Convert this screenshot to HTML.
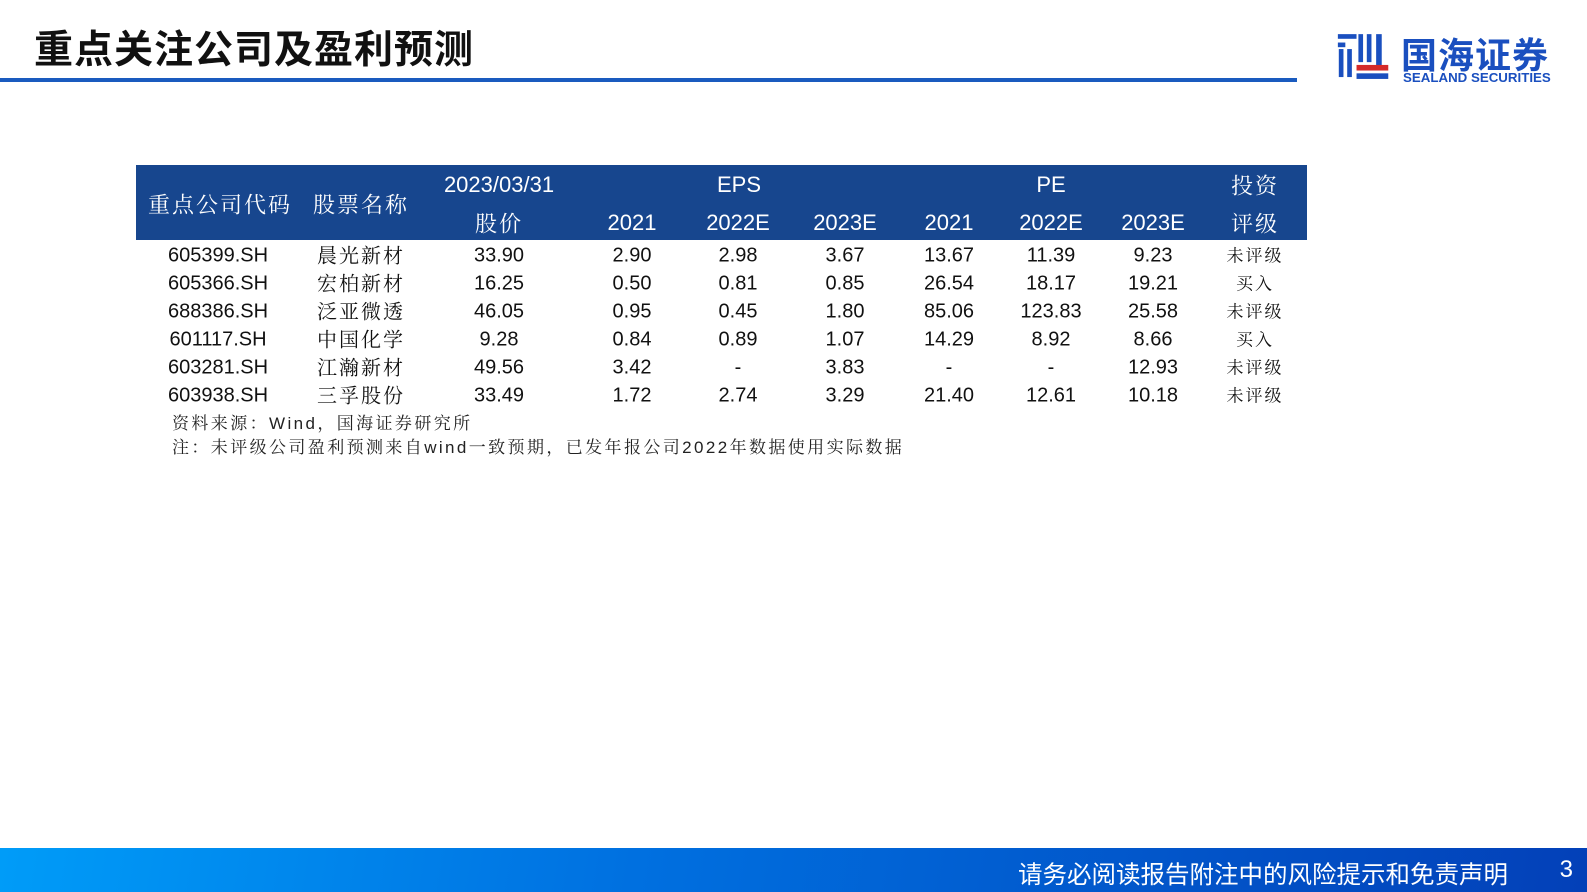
<!DOCTYPE html>
<html><head><meta charset="utf-8"><style>
body{margin:0;width:1587px;height:892px;position:relative;background:#fff;overflow:hidden;font-family:"Liberation Sans","Noto Sans CJK SC",sans-serif}
.title{position:absolute;left:34px;top:19px;font-size:39px;font-weight:bold;color:#111;letter-spacing:1px}
.line{position:absolute;left:0;top:78px;width:1297px;height:4px;background:#1a5bbf}
.hd{position:absolute;left:136px;top:165px;width:1171px;height:75px;background:#17468e}
.t{position:absolute;transform:translate(-50%,-50%);white-space:nowrap;font-size:20px;color:#111}
.w{color:#fff;font-size:22px}
.s{font-family:"Liberation Serif","Noto Serif CJK SC",serif;letter-spacing:2px}
.note{position:absolute;left:172px;font-size:17px;color:#222;letter-spacing:2.4px;font-family:"Liberation Sans","Noto Serif CJK SC",serif}
.foot{position:absolute;left:0;top:848px;width:1587px;height:44px;background:linear-gradient(100deg,#009cf8 0%,#0070e0 40%,#0340b8 100%)}
.ft{position:absolute;top:856px;right:79px;color:#fff;font-size:24.5px}
.pg{position:absolute;top:856px;right:14px;color:#fff;font-size:24px}
</style></head><body>
<div class="title">重点关注公司及盈利预测</div>
<div class="line"></div>
<svg style="position:absolute;left:1336px;top:30px" width="56" height="54" viewBox="0 0 60 55">
<rect x="2" y="3" width="20" height="5" fill="#1a4fbf"/><rect x="2" y="12" width="8" height="5" fill="#1a4fbf"/>
<rect x="3" y="19" width="5" height="30" fill="#1a4fbf"/><rect x="12" y="19" width="5" height="30" fill="#1a4fbf"/>
<rect x="24" y="3" width="5" height="30" fill="#1a4fbf"/><rect x="33" y="3" width="5" height="30" fill="#1a4fbf"/><rect x="43" y="3" width="6" height="34" fill="#1a4fbf"/>
<rect x="22" y="36" width="34" height="6" fill="#d42a2a"/><rect x="22" y="45" width="34" height="6" fill="#1a4fbf"/>
</svg>
<div style="position:absolute;left:1401px;top:27px;font-size:36px;font-weight:bold;color:#1a4fbf;letter-spacing:1px">国海证券</div>
<div style="position:absolute;left:1403px;top:70px;font-size:13.3px;font-weight:bold;color:#1a4fbf">SEALAND SECURITIES</div>
<div class="hd"></div>
<div class="t w s" style="left:220px;top:204px">重点公司代码</div>
<div class="t w s" style="left:361px;top:204px">股票名称</div>
<div class="t w" style="left:499px;top:185px">2023/03/31</div>
<div class="t w s" style="left:499px;top:223px">股价</div>
<div class="t w" style="left:739px;top:185px">EPS</div>
<div class="t w" style="left:1051px;top:185px">PE</div>
<div class="t w s" style="left:1255px;top:185px">投资</div>
<div class="t w s" style="left:1255px;top:223px">评级</div>
<div class="t w" style="left:632px;top:223px">2021</div>
<div class="t w" style="left:738px;top:223px">2022E</div>
<div class="t w" style="left:845px;top:223px">2023E</div>
<div class="t w" style="left:949px;top:223px">2021</div>
<div class="t w" style="left:1051px;top:223px">2022E</div>
<div class="t w" style="left:1153px;top:223px">2023E</div>
<div id="rows"></div>
<script>
var d=[["605399.SH","晨光新材","33.90","2.90","2.98","3.67","13.67","11.39","9.23","未评级"],
["605366.SH","宏柏新材","16.25","0.50","0.81","0.85","26.54","18.17","19.21","买入"],
["688386.SH","泛亚微透","46.05","0.95","0.45","1.80","85.06","123.83","25.58","未评级"],
["601117.SH","中国化学","9.28","0.84","0.89","1.07","14.29","8.92","8.66","买入"],
["603281.SH","江瀚新材","49.56","3.42","-","3.83","-","-","12.93","未评级"],
["603938.SH","三孚股份","33.49","1.72","2.74","3.29","21.40","12.61","10.18","未评级"]];
var xs=[218,361,499,632,738,845,949,1051,1153,1255],ys=[256,284,312,340,368,396],h="";
d.forEach(function(r,i){r.forEach(function(c,j){var s=(j==1||j==9)?" s":"";var fs=(j==9)?"font-size:17px;":"";var dy=(j==1||j==9)?-2:0;h+='<div class="t'+s+'" style="'+fs+'left:'+xs[j]+'px;top:'+(ys[i]+dy)+'px">'+c+'</div>';});});
document.getElementById("rows").innerHTML=h;
</script>
<div class="note" style="top:409px">资料来源：Wind，国海证券研究所</div>
<div class="note" style="top:433px">注：未评级公司盈利预测来自wind一致预期，已发年报公司2022年数据使用实际数据</div>
<div class="foot"></div>
<div class="ft">请务必阅读报告附注中的风险提示和免责声明</div>
<div class="pg">3</div>
</body></html>
